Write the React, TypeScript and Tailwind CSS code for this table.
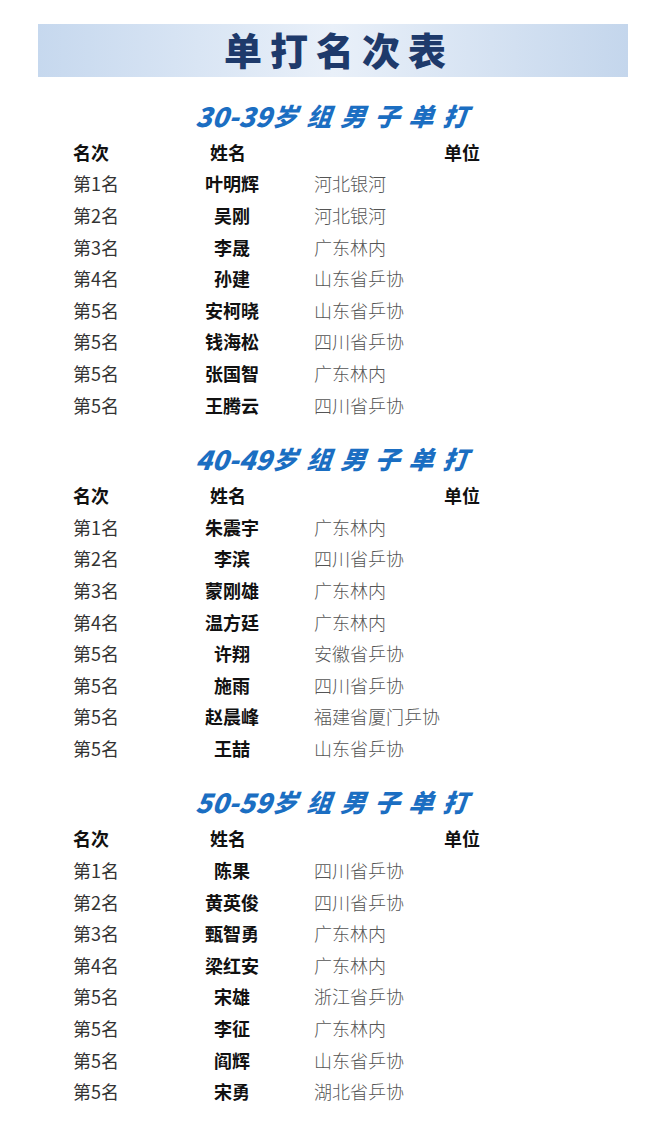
import React from "react";

type Row = [string, string, string];

const sections: { age: string; rows: Row[] }[] = [
  {
    age: "30-39",
    rows: [
      ["第1名", "叶明辉", "河北银河"],
      ["第2名", "吴刚", "河北银河"],
      ["第3名", "李晟", "广东林内"],
      ["第4名", "孙建", "山东省乒协"],
      ["第5名", "安柯晓", "山东省乒协"],
      ["第5名", "钱海松", "四川省乒协"],
      ["第5名", "张国智", "广东林内"],
      ["第5名", "王腾云", "四川省乒协"],
    ],
  },
  {
    age: "40-49",
    rows: [
      ["第1名", "朱震宇", "广东林内"],
      ["第2名", "李滨", "四川省乒协"],
      ["第3名", "蒙刚雄", "广东林内"],
      ["第4名", "温方廷", "广东林内"],
      ["第5名", "许翔", "安徽省乒协"],
      ["第5名", "施雨", "四川省乒协"],
      ["第5名", "赵晨峰", "福建省厦门乒协"],
      ["第5名", "王喆", "山东省乒协"],
    ],
  },
  {
    age: "50-59",
    rows: [
      ["第1名", "陈果", "四川省乒协"],
      ["第2名", "黄英俊", "四川省乒协"],
      ["第3名", "甄智勇", "广东林内"],
      ["第4名", "梁红安", "广东林内"],
      ["第5名", "宋雄", "浙江省乒协"],
      ["第5名", "李征", "广东林内"],
      ["第5名", "阎辉", "山东省乒协"],
      ["第5名", "宋勇", "湖北省乒协"],
    ],
  },
];

const font = { fontFamily: '"Noto Sans CJK SC", "Noto Sans", sans-serif' };

function Section({ age, rows }: { age: string; rows: Row[] }) {
  return (
    <div>
      <div className="h-[59px] pt-[17px] flex items-center justify-center">
        <div className="flex items-center italic font-black text-[#1b6ec2] leading-none -skew-x-6 pl-[4px]">
          <span className="text-[27px]">{age}</span>
          <span className="text-[25px] ml-[1px] tracking-[9px] mr-[-9px]">岁组男子单打</span>
        </div>
      </div>
      <div className="pl-[73px]">
        <div className="grid grid-cols-[81px_156px_1fr] items-center h-[31.6px] text-[18px] leading-none font-semibold text-[#111]">
          <span>名次</span>
          <span className="text-center pr-[8px]">姓名</span>
          <span className="pl-[134px]">单位</span>
        </div>
        {rows.map((r, i) => (
          <div
            key={i}
            className="grid grid-cols-[81px_156px_1fr] items-center h-[31.6px] text-[18px] leading-none"
          >
            <span className="text-[#333]">{r[0]}</span>
            <span className="text-center font-bold text-[#111]">{r[1]}</span>
            <span className="pl-[4px] text-[#555] font-light">{r[2]}</span>
          </div>
        ))}
      </div>
    </div>
  );
}

export default function App() {
  return (
    <div className="w-[660px] h-[1125px] bg-white pt-[24px] overflow-hidden" style={font}>
      <div className="ml-[38px] w-[590px] h-[53px] flex items-center justify-center bg-gradient-to-r from-[#c6d8ee] via-[#e9f0f9] to-[#c4d6ec]">
        <span className="text-[38px] font-black text-[#1e3a6b] tracking-[8px] mr-[-8px] pl-[4px] leading-none mb-[3px]">
          单打名次表
        </span>
      </div>
      {sections.map((s, i) => (
        <Section key={i} age={s.age} rows={s.rows} />
      ))}
    </div>
  );
}
